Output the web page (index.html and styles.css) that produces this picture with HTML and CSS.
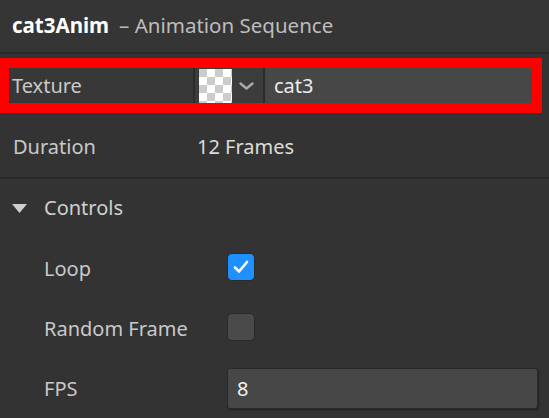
FILE: index.html
```html
<!DOCTYPE html>
<html lang="en">
<head>
    <meta charset="UTF-8">
    <title>cat3Anim - Animation Sequence</title>
    <link rel="stylesheet" href="styles.css">
</head>
<body>
    <div class="panel">
        <div class="header">
            <span class="asset-name">cat3Anim</span>
            <span class="asset-type">– Animation Sequence</span>
        </div>

        <div class="highlight">
            <div class="texture-row">
                <div class="field-label">Texture</div>
                <div class="swatch-picker">
                    <div class="swatch"></div>
                    <svg class="chevron" width="15" height="8" viewBox="0 0 15 8">
                        <polyline points="1.5,1.5 7.5,6.5 13.5,1.5" fill="none" stroke="#a9a9a9" stroke-width="2.4" stroke-linecap="round" stroke-linejoin="round"/>
                    </svg>
                </div>
                <div class="field-value">cat3</div>
            </div>
        </div>

        <div class="row info-row">
            <div class="label">Duration</div>
            <div class="value">12 Frames</div>
        </div>

        <div class="row section-head">
            <svg class="caret" width="15" height="10" viewBox="0 0 15 10">
                <polygon points="0,0 15,0 7.5,9" fill="#cfcfcf"/>
            </svg>
            <span>Controls</span>
        </div>

        <div class="row sub-row">
            <div class="label">Loop</div>
            <div class="checkbox checked">
                <svg width="18" height="16" viewBox="0 0 18 16">
                    <polyline points="3,8.5 7,12.5 15,3" fill="none" stroke="#fff" stroke-width="2.6" stroke-linecap="round" stroke-linejoin="round"/>
                </svg>
            </div>
        </div>

        <div class="row sub-row">
            <div class="label">Random Frame</div>
            <div class="checkbox"></div>
        </div>

        <div class="row sub-row">
            <div class="label">FPS</div>
            <div class="number-input">8</div>
        </div>
    </div>
</body>
</html>
```

FILE: styles.css
```css
* {
    margin: 0;
    padding: 0;
    box-sizing: border-box;
}

body {
    font-family: 'Noto Sans', 'Open Sans', sans-serif;
    background: #333333;
    color: #c9c9c9;
    font-size: 20px;
}

.panel {
    width: 549px;
    height: 418px;
    overflow: hidden;
}

.header {
    height: 54px;
    display: flex;
    align-items: center;
    padding: 0 0 3px 12px;
    border-bottom: 2px solid #2a2a2a;
    background: #353535;
}

.asset-name {
    color: #ffffff;
    font-weight: 700;
    font-size: 20.5px;
}

.asset-type {
    color: #bdbdbd;
    font-size: 20.5px;
    margin-left: 10px;
}

.highlight {
    margin-top: 4px;
    width: 542px;
    border: 10px solid #ff0000;
    border-left-width: 9px;
}

.texture-row {
    display: flex;
    height: 35px;
}

.field-label {
    width: 186px;
    background: #383838;
    padding-left: 3px;
    display: flex;
    align-items: center;
    border-right: 2px solid #2b2b2b;
}

.swatch-picker {
    width: 70px;
    background: #3c3c3c;
    display: flex;
    align-items: center;
    padding-left: 4px;
    border-right: 2px solid #2b2b2b;
}

.swatch {
    width: 33px;
    height: 34px;
    background-color: #cccccc;
    background-image: conic-gradient(#ffffff 0 25%, transparent 0 50%, #ffffff 0 75%, transparent 0);
    background-size: 16px 16px;
}

.chevron {
    margin-left: 7px;
}

.field-value {
    flex: 1;
    background: #474747;
    color: #ececec;
    padding-left: 9px;
    display: flex;
    align-items: center;
}

.row {
    display: flex;
    align-items: center;
}

.info-row {
    height: 66px;
    padding: 3px 0 0 13px;
    border-bottom: 2px solid #2a2a2a;
}

.info-row .label {
    width: 184px;
}

.info-row .value {
    color: #dcdcdc;
}

.section-head {
    height: 59px;
    padding: 0 0 2px 12px;
    color: #d0d0d0;
}

.caret {
    margin-right: 17px;
    margin-top: 2px;
}

.sub-row {
    height: 60px;
    padding-left: 44px;
}

.sub-row .label {
    width: 183px;
}

.checkbox {
    width: 28px;
    height: 28px;
    border-radius: 5px;
    background: #4a4a4a;
    border: 1px solid #2a2a2a;
    display: flex;
    align-items: center;
    justify-content: center;
    margin-top: -3px;
}

.checkbox.checked {
    background: #1e90ff;
    border-color: #2a2a2a;
}

.number-input {
    width: 311px;
    height: 41px;
    background: #474747;
    border: 1px solid #2a2a2a;
    border-radius: 3px;
    box-shadow: 1px 1px 2px rgba(0, 0, 0, 0.35);
    color: #f2f2f2;
    padding-left: 9px;
    display: flex;
    align-items: center;
}
```
